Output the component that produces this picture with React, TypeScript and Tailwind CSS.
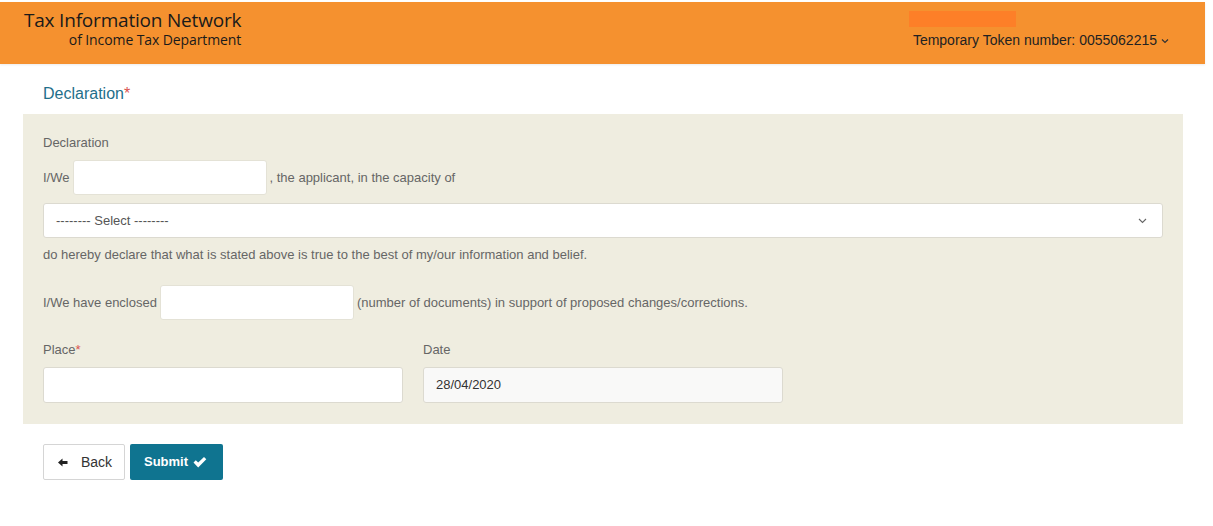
import React from "react";

export default function App() {
  return (
    <div className="w-[1213px] h-[526px] bg-white overflow-hidden" style={{ fontFamily: '"Liberation Sans", Arial, sans-serif' }}>
      <div className="pt-[2px]">
        <div className="w-[1205px] h-[62px] bg-[#f5912f] flex justify-between shadow-[0_1px_2px_rgba(0,0,0,0.08)]">
          <div className="pl-[24px] pt-[7px] flex flex-col items-end w-fit text-[#1a1a1a]" style={{ fontFamily: '"Open Sans", "Noto Sans", sans-serif' }}>
            <div className="text-[19px] leading-[22px] tracking-[-0.2px]">Tax Information Network</div>
            <div className="text-[14px] leading-[18px] tracking-[-0.1px]">of Income Tax Department</div>
          </div>
          <div className="pr-[36px] pt-[9px] flex flex-col items-start">
            <div className="w-[107px] h-[16px] bg-[#fd7f28] ml-[-4px]"></div>
            <div className="mt-[4px] flex items-center text-[14px] text-[#222] leading-[18px]">
              Temporary Token number: 0055062215
              <svg className="ml-[4px] mt-[2px]" width="8" height="6" viewBox="0 0 8 6"><path d="M1 1.5 L4 4.5 L7 1.5" stroke="#333" strokeWidth="1.2" fill="none" /></svg>
            </div>
          </div>
        </div>
      </div>

      <div className="ml-[23px] w-[1160px]">
        <div className="px-[20px] pt-[20px] h-[50px] text-[16px] text-[#1f6f8b] leading-[20px]">
          Declaration<span className="text-[#d9534f]">*</span>
        </div>
        <div className="bg-[#efede0] px-[20px] pt-[21px] pb-[21px] text-[13px] text-[#666]">
          <div className="leading-[16px]">Declaration</div>
          <div className="mt-[9px] flex items-center gap-[3px]">
            <span>I/We</span>
            <div className="w-[194px] h-[35px] bg-white rounded-[3px] border border-[#e4e2d6]"></div>
            <span>, the applicant, in the capacity of</span>
          </div>
          <div className="mt-[8px] h-[35px] bg-white rounded-[3px] border border-[#dcdad0] flex items-center justify-between pl-[12px] pr-[15px] text-[#555]">
            <span>-------- Select --------</span>
            <svg width="9" height="6" viewBox="0 0 9 6"><path d="M1 1 L4.5 4.5 L8 1" stroke="#666" strokeWidth="1.1" fill="none" /></svg>
          </div>
          <div className="mt-[9px] leading-[16px]">do hereby declare that what is stated above is true to the best of my/our information and belief.</div>
          <div className="mt-[22px] flex items-center gap-[3px]">
            <span>I/We have enclosed</span>
            <div className="w-[194px] h-[35px] bg-white rounded-[3px] border border-[#e4e2d6]"></div>
            <span>(number of documents) in support of proposed changes/corrections.</span>
          </div>
          <div className="mt-[22px] flex gap-[20px]">
            <div className="w-[360px]">
              <div className="leading-[16px]">Place<span className="text-[#d9534f]">*</span></div>
              <div className="mt-[9px] h-[36px] bg-white rounded-[3px] border border-[#dcdad0]"></div>
            </div>
            <div className="w-[360px]">
              <div className="leading-[16px]">Date</div>
              <div className="mt-[9px] h-[36px] bg-[#f9f9f8] rounded-[3px] border border-[#dcdad0] flex items-center pl-[12px] text-[#333]">28/04/2020</div>
            </div>
          </div>
        </div>
        <div className="px-[20px] pt-[20px] flex gap-[5px]">
          <button className="w-[82px] h-[36px] bg-white border border-[#d5d5d5] rounded-[2px] flex items-center justify-center gap-[13px] text-[14px] text-[#333] pl-[2px]">
            <svg width="10" height="9" viewBox="0 0 10 9"><path d="M0 4.5 L4.5 0.5 L4.5 3 L9.5 3 L9.5 6 L4.5 6 L4.5 8.5 Z" fill="#222" /></svg>
            <span>Back</span>
          </button>
          <button className="w-[93px] h-[36px] bg-[#0f7490] rounded-[2px] flex items-center justify-center gap-[5px] text-[13px] font-bold text-white pr-[2px]">
            <span>Submit</span>
            <svg width="14" height="11" viewBox="0 0 14 11"><path d="M0.5 5.5 L2.8 3.2 L5.2 5.6 L11 0 L13.3 2.3 L5.2 10.4 Z" fill="#fff" /></svg>
          </button>
        </div>
      </div>
    </div>
  );
}
